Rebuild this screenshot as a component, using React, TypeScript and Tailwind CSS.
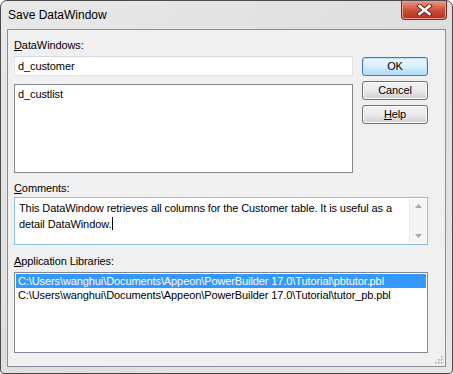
import React from 'react'

const font = { fontFamily: '"Liberation Sans", Arial, sans-serif' }

function Btn({ label, hot, primary }: { label: string; hot?: number; primary?: boolean }) {
  return (
    <button
      className={
        'h-[19px] w-[66px] rounded-[3px] border text-[11px] leading-none text-black ' +
        (primary
          ? 'border-[#3c7fb1] bg-gradient-to-b from-[#eaf6fd] via-[#d9f0fc] to-[#a7d9f5] shadow-[inset_0_0_0_1px_#b8e0f7]'
          : 'border-[#707070] bg-gradient-to-b from-[#f2f2f2] via-[#ebebeb] to-[#cfcfcf] shadow-[inset_0_0_0_1px_#fcfcfc]')
      }
    >
      {hot === undefined ? label : (
        <>
          {label.slice(0, hot)}
          <span className="underline">{label[hot]}</span>
          {label.slice(hot + 1)}
        </>
      )}
    </button>
  )
}

function Label({ text, hot, className }: { text: string; hot: number; className?: string }) {
  return (
    <div className={'h-[14px] text-[11px] leading-[14px] text-black ' + (className ?? '')}>
      {text.slice(0, hot)}
      <span className="underline">{text[hot]}</span>
      {text.slice(hot + 1)}
    </div>
  )
}

export default function App() {
  const libs = [
    'C:\\Users\\wanghui\\Documents\\Appeon\\PowerBuilder 17.0\\Tutorial\\pbtutor.pbl',
    'C:\\Users\\wanghui\\Documents\\Appeon\\PowerBuilder 17.0\\Tutorial\\tutor_pb.pbl',
  ]

  return (
    <div style={font} className="h-[374px] w-[453px] bg-white tracking-[-0.1px]">
      <div className="relative flex h-[374px] w-[453px] flex-col rounded-t-[7px] rounded-b-[4px] border border-[#4b4b4b] bg-gradient-to-br from-[#e9e9e9] via-[#dedede] to-[#e6e6e6]">
        {/* title bar */}
        <div className="flex h-[28px] items-start justify-between">
          <div className="pl-[7px] pt-[7px] text-[12px] leading-[14px] tracking-normal text-black">Save DataWindow</div>
          <div className="mr-[5px] flex h-[19px] w-[46px] items-center justify-center rounded-b-[4px] border border-t-0 border-[#7a2a20] bg-gradient-to-b from-[#e8998a] via-[#d0503a] to-[#b52d18] shadow-[inset_0_0_0_1px_#e99d8c]">
            <svg width="17" height="12" viewBox="0 0 17 12">
              <path d="M3.5 2 L13.5 10 M13.5 2 L3.5 10" stroke="#5b2018" strokeWidth="4.4" strokeLinecap="square" />
              <path d="M3.5 2 L13.5 10 M13.5 2 L3.5 10" stroke="#ffffff" strokeWidth="2.6" strokeLinecap="square" />
            </svg>
          </div>
        </div>

        {/* client area */}
        <div className="relative mx-[6px] mb-[6px] flex-1 border border-[#8a8f96] bg-[#f0f0f0] pl-[6px] pr-[17px]">
          <Label text="DataWindows:" hot={0} className="mt-[8px]" />
          <div className="mt-[4px] flex gap-[9px]">
            <div className="flex w-[339px] flex-col">
              <div className="flex h-[20px] items-center border border-[#e0e3e8] border-t-[#d4d7dc] bg-white pl-[3px] text-[11px] text-black">
                d_customer
              </div>
              <div className="mt-[8px] h-[89px] border border-[#828790] bg-white pl-[3px] pt-[2px] text-[11px] leading-[14px] text-black">
                d_custlist
              </div>
            </div>
            <div className="mt-[1px] flex flex-col gap-[5px]">
              <Btn label="OK" primary />
              <Btn label="Cancel" />
              <Btn label="Help" hot={0} />
            </div>
          </div>

          <Label text="Comments:" hot={0} className="mt-[8px]" />
          <div className="mt-[2px] flex h-[48px] border border-[#8fbce9] bg-white">
            <div className="flex-1 pl-[4px] pt-[3px] text-[11px] leading-[14px] text-black">
              This DataWindow retrieves all columns for the Customer table. It is useful as a detail DataWindow.
              <span className="ml-[1px] inline-block h-[13px] w-[1px] translate-y-[2px] bg-black" />
            </div>
            <div className="m-[1px] flex w-[17px] flex-col items-center justify-between border-l border-[#e9e9e9] bg-[#f5f5f5] py-[5px]">
              <svg width="7" height="4" viewBox="0 0 7 4"><path d="M0 4 L3.5 0 L7 4 Z" fill="#a8a8a8" /></svg>
              <svg width="7" height="4" viewBox="0 0 7 4"><path d="M0 0 L7 0 L3.5 4 Z" fill="#a8a8a8" /></svg>
            </div>
          </div>

          <Label text="Application Libraries:" hot={0} className="mt-[9px]" />
          <div className="mt-[4px] h-[81px] border border-[#828790] bg-white p-[1px] text-[11px] leading-[14px]">
            {libs.map((l, i) => (
              <div
                key={l}
                className={'h-[14px] whitespace-nowrap pl-[2px] ' + (i === 0 ? 'bg-[#3399ff] text-white' : 'text-black')}
              >
                {l}
              </div>
            ))}
          </div>

          {/* size grip */}
          <svg className="absolute bottom-[2px] right-[2px]" width="10" height="10" viewBox="0 0 10 10">
            {[
              [8, 2], [8, 5], [5, 5], [8, 8], [5, 8], [2, 8],
            ].map(([x, y]) => (
              <rect key={`${x}-${y}`} x={x} y={y} width="1.5" height="1.5" fill="#a0a0a0" />
            ))}
          </svg>
        </div>
      </div>
    </div>
  )
}
